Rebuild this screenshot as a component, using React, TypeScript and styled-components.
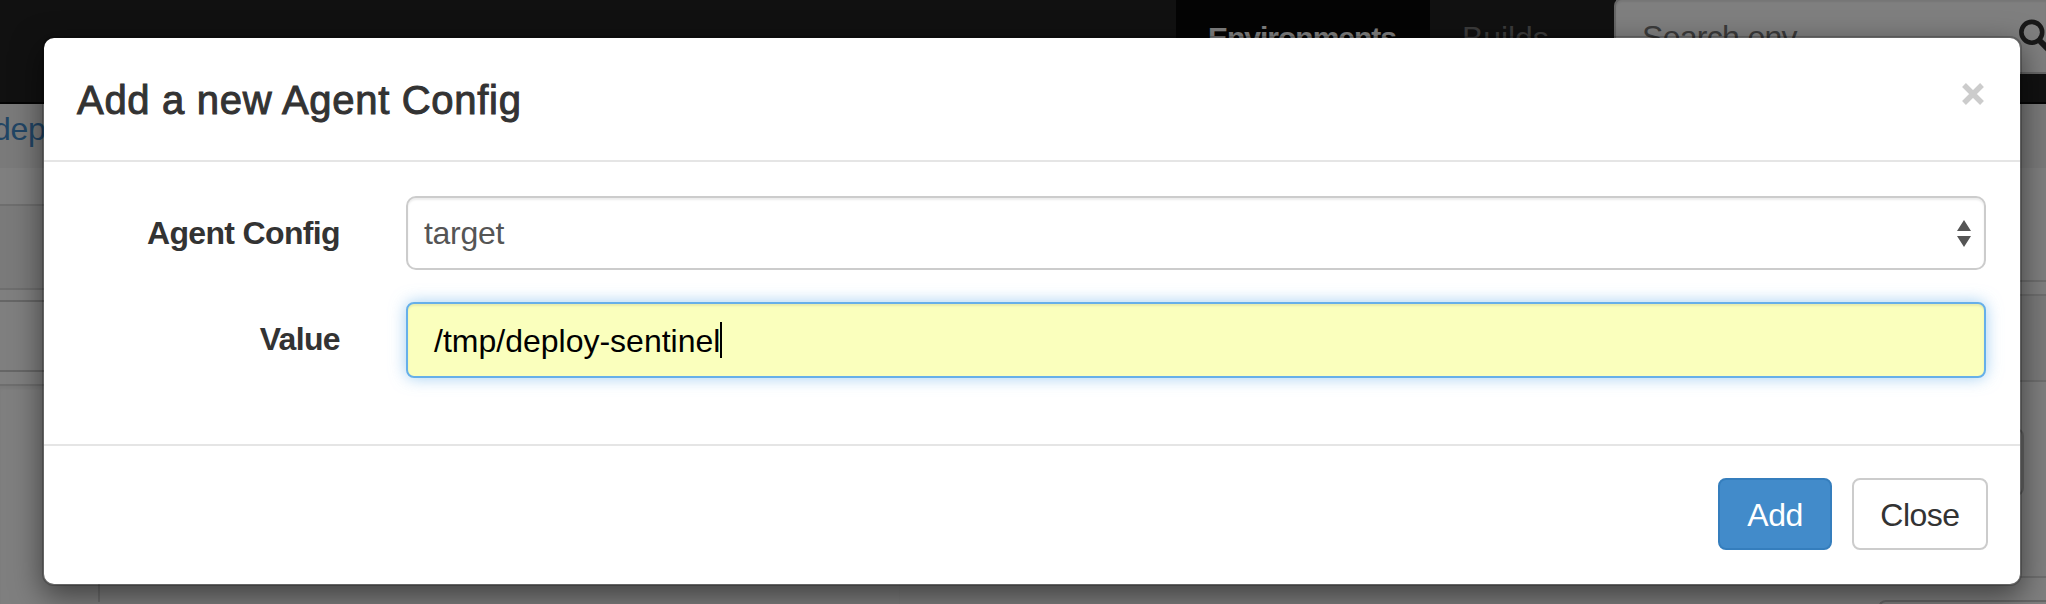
import React from 'react';
import styled, { createGlobalStyle } from 'styled-components';

const Global = createGlobalStyle`
  * { box-sizing: border-box; }
  body { margin: 0; overflow: hidden; background: #fff; color: #333; font: 32px/44px "Liberation Sans", Arial, sans-serif; }
`;
const Screen = styled.div`position: relative; width: 2046px; height: 604px; overflow: hidden;`;
const Navbar = styled.nav`display: flex; justify-content: flex-end; height: 104px; background: #222; border-bottom: 2px solid #080808; overflow: hidden;`;
const NavLink = styled.a<{ $active?: boolean; $width: number }>`
  width: ${p => p.$width}px; padding: 16px 0 0 32px; white-space: nowrap;
  font-weight: ${p => (p.$active ? 'bold' : 'normal')};
  font-size: ${p => (p.$active ? 30 : 32)}px;
  letter-spacing: ${p => (p.$active ? -1 : -0.1)}px;
  background: ${p => (p.$active ? '#080808' : 'transparent')};
  color: ${p => (p.$active ? '#fff' : '#777')};
`;
const Search = styled.div`
  display: flex; justify-content: space-between; width: 432px; height: 76px; margin-top: -2px; padding: 15px 0 0 26px;
  background: #fff; border: 2px solid #ccc; border-right: 0; border-radius: 8px 0 0 8px; color: #777; letter-spacing: -.7px;
  box-shadow: inset 0 2px 2px rgba(0,0,0,.075);
`;
const SearchIcon = styled.svg`flex: none; width: 28px; height: 36px; margin-top: 2px;`;
const Crumbs = styled.div`height: 64px; padding: 3px 0 0; background: #f5f5f5; color: #428bca; text-indent: -7px; letter-spacing: -.3px;`;
const Columns = styled.div`display: flex; justify-content: space-between; height: 436px;`;
const Column = styled.div`width: 900px;`;
const Strip = styled.div<{ $h: number; $bg?: string; $line?: string }>`
  height: ${p => p.$h}px; background: ${p => p.$bg || '#fff'};
  border-bottom: 2px solid ${p => p.$line || '#ddd'};
`;
const Panel = styled.div`height: 218px; box-shadow: inset 0 3px 3px rgba(0,0,0,.05); padding-left: 98px;`;
const PanelBody = styled.div`height: 216px; border-left: 2px solid #ddd;`;
const ActionStrip = styled.div`display: flex; justify-content: flex-end; height: 196px; padding: 46px 22px 0 0; border-bottom: 2px solid #ddd;`;
const GhostButton = styled.div`width: 120px; height: 68px; border: 2px solid #ccc; border-radius: 8px;`;
const TableBox = styled.div`height: 40px; margin: 22px 0 0 732px; border: 2px solid #ccc; border-right: 0; border-radius: 8px 0 0 0;`;
const Backdrop = styled.div`position: absolute; inset: 0; padding: 36px 24px 0 42px; background: rgba(0,0,0,.5);`;
const Dialog = styled.section`
  width: 1980px; height: 550px; background: #fff; background-clip: padding-box; border: 2px solid rgba(0,0,0,.2);
  border-radius: 12px; box-shadow: 0 10px 30px rgba(0,0,0,.5);
`;
const Header = styled.header`display: flex; justify-content: space-between; height: 124px; padding: 37px 34px 0 33px; border-bottom: 2px solid #e5e5e5;`;
const Title = styled.h4`margin: 0; font-size: 40px; line-height: 50px; font-weight: normal; letter-spacing: .7px; -webkit-text-stroke: 1px #333;`;
const CloseIcon = styled.svg`width: 26px; height: 26px; margin-top: 6px;`;
const Body = styled.div`display: flex; flex-direction: column; gap: 32px; height: 282px; padding-top: 34px;`;
const Row = styled.div`display: flex; height: 74px;`;
const Label = styled.label`width: 296px; margin-right: 66px; padding-top: 15px; text-align: right; font-weight: bold; letter-spacing: -.65px;`;
const Select = styled.div`
  display: flex; justify-content: space-between; width: 1580px; height: 74px; padding: 13px 13px 0 16px;
  color: #555; border: 2px solid #ccc; border-radius: 10px; box-shadow: inset 0 2px 2px rgba(0,0,0,.075);
  letter-spacing: -.3px;
`;
const Arrows = styled.svg`width: 14px; height: 28px; margin-top: 9px;`;
const Field = styled.div`
  display: flex; width: 1580px; height: 76px; padding: 15px 26px; color: #000; background: #faffbd;
  border: 2px solid #66afe9; border-radius: 8px;
  box-shadow: inset 0 2px 2px rgba(0,0,0,.075), 0 0 16px rgba(102,175,233,.6);
`;
const Caret = styled.span`width: 2px; height: 36px; margin-top: 3px; background: #000;`;
const Footer = styled.footer`display: flex; justify-content: flex-end; gap: 20px; padding: 32px; border-top: 2px solid #e5e5e5;`;
const Button = styled.button<{ $primary?: boolean }>`
  width: ${p => (p.$primary ? 114 : 136)}px; height: 72px; padding: 2px 0 0; font: inherit; border-radius: 8px;
  letter-spacing: -.5px;
  border: 2px solid ${p => (p.$primary ? '#357ebd' : '#ccc')};
  background: ${p => (p.$primary ? '#428bca' : '#fff')};
  color: ${p => (p.$primary ? '#fff' : '#333')};
`;

export default function App() {
  return (
    <Screen>
      <Global />
      <Navbar>
        <NavLink $active $width={254}>Environments</NavLink>
        <NavLink $width={184}>Builds</NavLink>
        <Search>
          <span>Search env</span>
          <SearchIcon viewBox="0 0 28 36">
            <circle cx="13.8" cy="15.3" r="10.4" fill="none" stroke="#333" strokeWidth="4.6" />
            <path d="M21 23 L32 34" stroke="#333" strokeWidth="6" />
          </SearchIcon>
        </Search>
      </Navbar>
      <Crumbs>dep</Crumbs>
      <Columns>
        <Column>
          <Strip $h={38} />
          <Strip $h={84} $bg="#f5f5f5" />
          <Strip $h={12} $line="#ccc" />
          <Strip $h={70} $line="#ccc" />
          <Strip $h={14} />
          <Panel><PanelBody /></Panel>
        </Column>
        <Column>
          <Strip $h={114} />
          <Strip $h={14} />
          <Strip $h={86} $bg="#f5f5f5" />
          <ActionStrip><GhostButton /></ActionStrip>
          <TableBox />
        </Column>
      </Columns>
      <Backdrop>
        <Dialog>
          <Header>
            <Title>Add a new Agent Config</Title>
            <CloseIcon viewBox="0 0 26 26"><path d="M4 4 L22 22 M22 4 L4 22" stroke="#ccc" strokeWidth="5.4" /></CloseIcon>
          </Header>
          <Body>
            <Row>
              <Label>Agent Config</Label>
              <Select>
                target
                <Arrows viewBox="0 0 14 28"><path d="M7 0 L14 11 H0 Z M0 16 H14 L7 27 Z" fill="#555" /></Arrows>
              </Select>
            </Row>
            <Row>
              <Label>Value</Label>
              <Field>/tmp/deploy-sentinel<Caret /></Field>
            </Row>
          </Body>
          <Footer>
            <Button $primary>Add</Button>
            <Button>Close</Button>
          </Footer>
        </Dialog>
      </Backdrop>
    </Screen>
  );
}
